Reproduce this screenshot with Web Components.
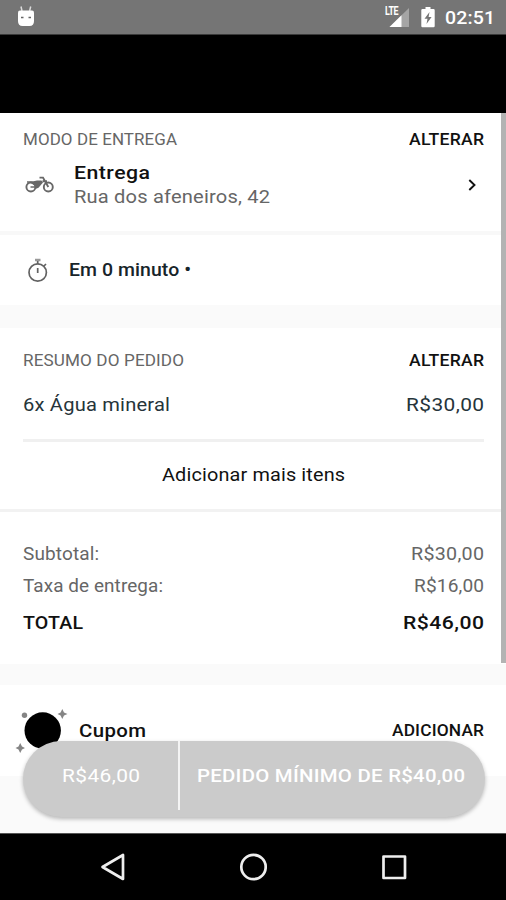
<!DOCTYPE html>
<html lang="pt-BR">
<head>
<meta charset="utf-8">
<meta name="viewport" content="width=device-width">
<title>Resumo do pedido</title>
<style>
html,body{margin:0;padding:0}
body{width:506px;height:900px;overflow:hidden;background:#fafafa;font-family:Roboto,"Liberation Sans",sans-serif;color:#000}
</style>
</head>
<body>
<order-screen></order-screen>
<script>
function define(name, html, setup) {
  const tpl = document.createElement('template');
  tpl.innerHTML = html.trim();
  customElements.define(name, class extends HTMLElement {
    constructor() {
      super();
      this.attachShadow({ mode: 'open' }).append(tpl.content.cloneNode(true));
    }
    connectedCallback() { if (setup) setup(this); }
  });
}

/* One line of text; "fit" is its width in px, reached mostly by wider letters and partly by tracking. */
define('text-line', `
<style>
:host{display:block;flex:none;white-space:nowrap;font-size:19px;line-height:24px;height:24px;color:#111}
:host([size="label"]){font-size:16.6px}
:host([size="sum"]){font-size:18.4px}
:host([tone="muted"]){color:#666}
:host([tone="ink"]){color:#26343a}
:host([tone="dark"]){color:#17242a}
:host([tone="light"]){color:#fff}
:host([weight="medium"]){font-weight:500}
span{display:inline-block;transform-origin:0 50%}
</style><span><slot></slot></span>`, el => {
  const span = el.shadowRoot.querySelector('span');
  const fit = parseFloat(el.getAttribute('fit'));
  if (!fit) return;
  const natural = span.getBoundingClientRect().width;
  const scale = Math.pow(fit / natural, .75);
  const gap = (fit / scale - natural) / (el.textContent.length - 1);
  span.style.letterSpacing = gap.toFixed(3) + 'px';
  span.style.transform = `scaleX(${scale.toFixed(4)})`;
  el.style.width = fit + 'px';
});

define('split-row', `
<style>:host{display:flex;justify-content:space-between;align-items:center;height:24px}</style><slot></slot>`);

define('content-card', `
<style>:host{display:block;box-sizing:border-box;background:#fff;padding:0 22px 0 23px}</style><slot></slot>`);

define('status-bar', `
<style>
:host{display:flex;align-items:center;box-sizing:border-box;height:35px;padding:0 11px 0 17px;background:#757575;color:#fff;border-bottom:1px solid #3a3a3a}
svg{display:block;flex:none}
.bot{margin:-1px auto 0 0}
.signal{margin-right:11px;width:26px;height:22px;position:relative}
.lte{font:bold 12px/12px "Roboto";transform:scaleX(.74);transform-origin:0 0;position:absolute;left:1px;top:-1px;letter-spacing:-.5px}
.battery{margin-right:10px}
text-line{margin-top:2px}
</style>
<svg class="bot" width="18" height="22" viewBox="0 0 18 22"><path d="M4 .5 5 5M13.700 .5 12.600 5" stroke="#fff" stroke-width="1.500" opacity=".75"/><path d="M1 6.500Q1 4.500 3 4.500H15Q17 4.500 17 6.500V15Q17 20 12.500 20H5.500Q1 20 1 15Z" fill="#fff"/><path d="M4 11.500H6.500M11.500 11.500H14" stroke="#666" stroke-width="1.500"/></svg>
<div class="signal"><span class="lte">LTE</span><svg width="26" height="22" viewBox="0 0 26 22"><path d="M25 2V21H5.500Z" fill="#a5a5a5"/><path d="M17.500 9.300V21H5.500Z" fill="#fff"/></svg></div>
<svg class="battery" width="14" height="22" viewBox="0 0 14 22"><path d="M4.500 1H9.500V3H12.500Q13.700 3 13.700 4.200V20Q13.700 21.200 12.500 21.200H1.500Q.300 21.200 .300 20V4.200Q.300 3 1.500 3H4.500Z" fill="#fff"/><path d="M8.500 6 3.500 12.700H6.500L5.500 18 10.600 11.100H7.600Z" fill="#757575"/></svg>
<text-line tone="light" weight="medium" fit="50">02:51</text-line>`);

define('app-header', `<style>:host{display:block;height:78px;background:#000}</style>`);

define('delivery-card', `
<style>
:host{display:block}
.mode{height:118px;padding-top:15px}
.place{display:flex;align-items:center;padding-top:9px}
.names{margin-left:19px;margin-right:auto}
.rule{height:4px;background:#f8f8f8}
.time{display:flex;align-items:center;height:70px}
.time text-line{margin:0 0 0 20px}
svg{display:block;flex:none}
.chev{margin-right:7px}
</style>
<content-card class="mode">
<split-row><text-line size="label" tone="muted" fit="154">MODO DE ENTREGA</text-line><text-line size="label" weight="medium" fit="75">ALTERAR</text-line></split-row>
<div class="place">
<svg width="32" height="24" viewBox="0 0 32 24" fill="none" stroke="#686868" stroke-width="1.900"><circle cx="7.900" cy="14" r="4.500"/><circle cx="25.300" cy="14" r="4.500"/><path d="M4 8.300H10.500L14 7.500H18.500L20 9.500 15.500 14.800 12.500 16 11.300 12.500 7.500 9.700H4Z" fill="#686868" stroke="none"/><path d="M16.500 4.600H20L25.300 14M19.500 8.300H24"/><path d="M7.500 14H13" stroke-width="1.500"/></svg>
<div class="names"><text-line weight="medium" fit="76">Entrega</text-line><text-line tone="muted" fit="196">Rua dos afeneiros, 42</text-line></div>
<svg class="chev" width="10" height="14" viewBox="0 0 10 14"><path d="M2.300 2 7.500 7 2.300 12" fill="none" stroke="#111" stroke-width="1.900"/></svg>
</div>
</content-card>
<div class="rule"></div>
<content-card class="time">
<svg width="26" height="26" viewBox="0 0 26 26" fill="none" stroke="#626262" stroke-width="1.700"><circle cx="14.700" cy="15.500" r="8.700"/><path d="M12 3H17.500" stroke-width="2.500" stroke="#999"/><path d="M14.700 4V7M14.700 11V16M21 9 23 7"/></svg>
<text-line weight="medium" tone="dark" fit="122">Em 0 minuto •</text-line>
</content-card>`);

define('order-card', `
<style>
:host{display:block}
.items{height:181px;padding-top:21px}
.item{margin-top:20px;height:24px}
.line{height:3px;margin:22px 0 0;background:#f0f0f0}
.more{display:flex;justify-content:center;padding-top:21px;color:#111}
.rule{height:3px;background:#f2f2f2}
.sums{height:152px;padding-top:30px}
.sums split-row+split-row{margin-top:8px}
.sums split-row.total{margin-top:13px}
</style>
<content-card class="items">
<split-row><text-line size="label" tone="muted" fit="161">RESUMO DO PEDIDO</text-line><text-line size="label" weight="medium" fit="75">ALTERAR</text-line></split-row>
<split-row class="item"><text-line tone="ink" fit="147">6x Água mineral</text-line><text-line tone="ink" fit="78">R$30,00</text-line></split-row>
<div class="line"></div>
<div class="more"><text-line fit="183">Adicionar mais itens</text-line></div>
</content-card>
<div class="rule"></div>
<content-card class="sums">
<split-row><text-line size="sum" tone="muted" fit="76">Subtotal:</text-line><text-line size="sum" tone="muted" fit="73">R$30,00</text-line></split-row>
<split-row><text-line size="sum" tone="muted" fit="140">Taxa de entrega:</text-line><text-line size="sum" tone="muted" fit="70">R$16,00</text-line></split-row>
<split-row class="total"><text-line weight="medium" fit="60">TOTAL</text-line><text-line weight="medium" fit="81">R$46,00</text-line></split-row>
</content-card>`);

define('coupon-card', `
<style>
:host{display:block}
content-card{display:flex;height:91px;align-items:flex-start;padding-top:18px;padding-left:14px}
svg{display:block;flex:none}
text-line{margin-top:16px}
.name{margin-left:10px;margin-right:auto}
</style>
<content-card>
<svg width="55" height="56" viewBox="14 703 55 56"><circle cx="42.700" cy="730.500" r="18.200"/><g fill="#858585"><circle cx="24.500" cy="715.300" r="2.700"/><path d="M62.300 709 64 712.600 67.500 714 64 715.500 62.300 719 60.600 715.500 57.500 714 60.600 712.600ZM20.200 743 22 746.500 25 748 22 749.600 20.200 753 18.500 749.600 15.500 748 18.500 746.500Z"/></g></svg>
<text-line class="name" weight="medium" fit="67">Cupom</text-line>
<text-line size="label" weight="medium" fit="92">ADICIONAR</text-line>
</content-card>`);

define('checkout-button', `
<style>
:host{display:flex;box-sizing:border-box;height:76px;border-radius:38px;background:#cbcbcb;box-shadow:0 2px 4px rgba(0,0,0,.27)}
.price,.label{display:flex;align-items:center;justify-content:center;height:70px}
.price{width:155px}
.label{flex:1;padding-right:3px}
.bar{width:2px;height:69px;background:#f4f4f4}
</style>
<div class="price"><text-line tone="light" fit="78">R$46,00</text-line></div><div class="bar"></div>
<div class="label"><text-line tone="light" weight="medium" fit="268">PEDIDO MÍNIMO DE R$40,00</text-line></div>`);

define('nav-bar', `
<style>
:host{display:flex;align-items:center;justify-content:center;gap:112px;box-sizing:border-box;height:67px;background:#000;border-top:1px solid #555}
svg{display:block;fill:none;stroke:#eee;stroke-width:2.700;stroke-linejoin:round}
</style>
<svg width="28" height="30" viewBox="0 0 28 30"><path d="M24 3V27L3.500 15Z"/></svg>
<svg width="28" height="30" viewBox="0 0 28 30"><circle cx="14.500" cy="15" r="12.200"/></svg>
<svg width="28" height="30" viewBox="0 0 28 30"><rect x="4.500" y="4.500" width="21.500" height="21.500"/></svg>`);

define('order-screen', `
<style>
:host{display:flex;flex-direction:column;width:506px;height:900px}
main{position:relative;height:720px;flex:none;overflow:hidden;background:#fafafa}
delivery-card{margin-bottom:23px}
order-card{margin-bottom:21px}
.thumb{position:absolute;right:0;top:0;width:5px;height:550px;background:#b3b3b3}
checkout-button{position:absolute;left:23px;right:21px;bottom:16px}
</style>
<status-bar></status-bar>
<app-header></app-header>
<main>
<delivery-card></delivery-card>
<order-card></order-card>
<coupon-card></coupon-card>
<div class="thumb"></div>
<checkout-button></checkout-button>
</main>
<nav-bar></nav-bar>`);
</script>
</body>
</html>
